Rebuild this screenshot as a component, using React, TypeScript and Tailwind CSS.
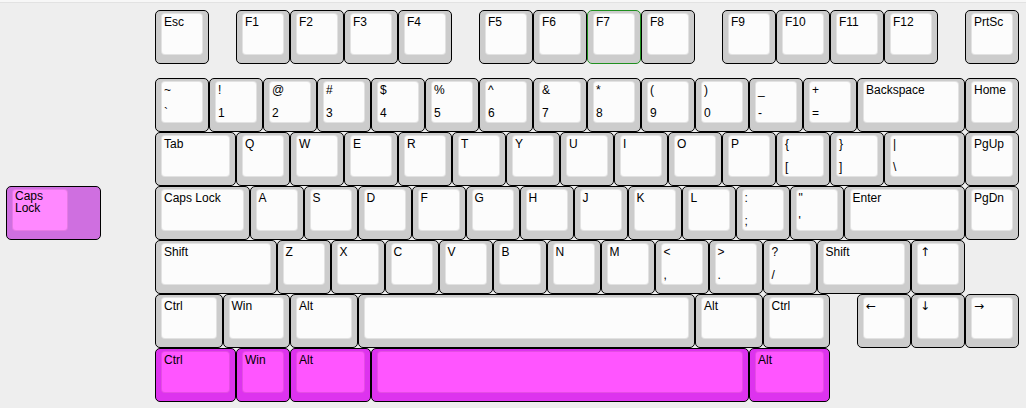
import React from "react";

const U = 54;

type Tone = "gray" | "pink" | "caps";

type KeyDef = {
  t?: string;
  b?: string;
  w?: number;
  top?: number; // width of a stepped key's top, in units
  gap?: number; // empty space before the key, in units
  tone?: Tone;
  selected?: boolean;
  glyph?: boolean;
};

const TONES: Record<Tone, { outer: string; top: string }> = {
  gray: { outer: "bg-[#cccccc]", top: "bg-[#fcfcfc]" },
  pink: { outer: "bg-[#dd33ee]", top: "bg-[#ff55ff]" },
  caps: { outer: "bg-[#cf6fe0]", top: "bg-[#ff88ff]" },
};

const k = (t?: string, b?: string, w = 1, extra: Partial<KeyDef> = {}): KeyDef => ({
  t,
  b,
  w,
  ...extra,
});

const ROWS: KeyDef[][] = [
  [
    k("Esc"),
    k("F1", undefined, 1, { gap: 0.5 }),
    k("F2"),
    k("F3"),
    k("F4"),
    k("F5", undefined, 1, { gap: 0.5 }),
    k("F6"),
    k("F7", undefined, 1, { selected: true }),
    k("F8"),
    k("F9", undefined, 1, { gap: 0.5 }),
    k("F10"),
    k("F11"),
    k("F12"),
    k("PrtSc", undefined, 1, { gap: 0.5 }),
  ],
  [
    k("~", "`"),
    k("!", "1"),
    k("@", "2"),
    k("#", "3"),
    k("$", "4"),
    k("%", "5"),
    k("^", "6"),
    k("&", "7"),
    k("*", "8"),
    k("(", "9"),
    k(")", "0"),
    k("_", "-"),
    k("+", "="),
    k("Backspace", undefined, 2),
    k("Home"),
  ],
  [
    k("Tab", undefined, 1.5),
    ..."QWERTYUIOP".split("").map((c) => k(c)),
    k("{", "["),
    k("}", "]"),
    k("|", "\\", 1.5),
    k("PgUp"),
  ],
  [
    k("Caps Lock", undefined, 1.75),
    ..."ASDFGHJKL".split("").map((c) => k(c)),
    k(":", ";"),
    k('"', "'"),
    k("Enter", undefined, 2.25),
    k("PgDn"),
  ],
  [
    k("Shift", undefined, 2.25),
    ..."ZXCVBNM".split("").map((c) => k(c)),
    k("<", ","),
    k(">", "."),
    k("?", "/"),
    k("Shift", undefined, 1.75),
    k("↑", undefined, 1, { glyph: true }),
  ],
  [
    k("Ctrl", undefined, 1.25),
    k("Win", undefined, 1.25),
    k("Alt", undefined, 1.25),
    k(undefined, undefined, 6.25),
    k("Alt", undefined, 1.25),
    k("Ctrl", undefined, 1.25),
    k("←", undefined, 1, { gap: 0.5, glyph: true }),
    k("↓", undefined, 1, { glyph: true }),
    k("→", undefined, 1, { glyph: true }),
  ],
  [
    k("Ctrl", undefined, 1.5, { tone: "pink" }),
    k("Win", undefined, 1, { tone: "pink" }),
    k("Alt", undefined, 1.5, { tone: "pink" }),
    k(undefined, undefined, 7, { tone: "pink" }),
    k("Alt", undefined, 1.5, { tone: "pink" }),
  ],
];

function Key({ def, wrap = false }: { def: KeyDef; wrap?: boolean }) {
  const tone = TONES[def.tone ?? "gray"];
  const w = (def.w ?? 1) * U;
  return (
    <div
      className={`h-[54px] shrink-0 rounded-[5px] border pt-[2px] pr-[5px] pb-[8px] pl-[5px] ${tone.outer} ${
        def.selected ? "border-[#1f8f1f]" : "border-black"
      }`}
      style={{ width: w }}
    >
      <div
        className={`flex h-full flex-col justify-between rounded-[4px] border border-black/10 pl-[2px] pr-[1px] text-[12px] text-black ${tone.top} ${
          wrap ? "pt-0 leading-[12px]" : "pt-[1px] pb-[2px] leading-[14px]"
        }`}
        style={def.top ? { width: def.top * U - 12 } : undefined}
      >
        <span
          className={`${wrap ? "" : "whitespace-nowrap"} ${
            def.glyph ? "font-['DejaVu_Sans',sans-serif] text-[12px]" : ""
          }`}
        >
          {def.t ?? "\u00a0"}
        </span>
        {def.b && <span className="whitespace-nowrap">{def.b}</span>}
      </div>
    </div>
  );
}

function Row({ keys }: { keys: KeyDef[] }) {
  return (
    <div className="flex h-[54px]">
      {keys.map((def, i) => (
        <React.Fragment key={i}>
          {def.gap ? <div className="shrink-0" style={{ width: def.gap * U }} /> : null}
          <Key def={def} />
        </React.Fragment>
      ))}
    </div>
  );
}

export default function App() {
  const [fnRow, ...mainRows] = ROWS;
  return (
    <div className="h-[408px] w-[1026px] overflow-hidden bg-[#eeeeee] font-['Liberation_Sans',Arial,sans-serif]">
      <div className="h-[3px] border-b border-[#e2e2e2] bg-[#f7f7f7]" />
      <div className="flex pt-[7px]">
        <div className="w-[155px] shrink-0 pt-[176px] pl-[6px]">
          <Key def={{ t: "Caps Lock", w: 1.75, top: 1.25, tone: "caps" }} wrap />
        </div>
        <div className="flex flex-col">
          <Row keys={fnRow} />
          <div className="h-[13.5px]" />
          {mainRows.map((keys, i) => (
            <Row key={i} keys={keys} />
          ))}
        </div>
      </div>
    </div>
  );
}
